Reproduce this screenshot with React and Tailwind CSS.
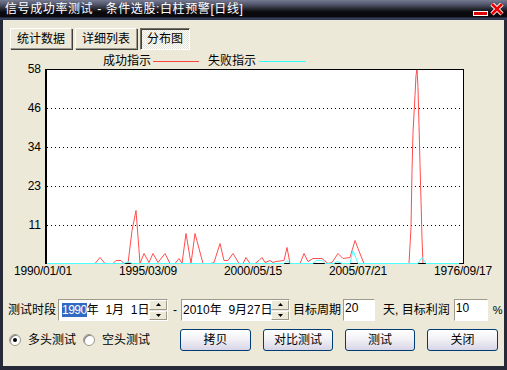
import React from 'react'

const font = { fontFamily: '"Liberation Sans", "Noto Sans CJK SC", sans-serif' }

// red = 成功指示, cyan = 失败指示 (global pixel coords, shifted into the plot)
const red = [
  [45, 263], [95, 263], [100, 257], [105, 263], [113, 263], [116, 260], [121, 260], [124, 263],
  [128, 263], [132, 230], [136, 210], [140, 263], [144, 253], [149, 262], [153, 253], [158, 262],
  [165, 253], [170, 263], [175, 263], [179, 258], [182, 263], [186, 233], [191, 263], [195, 233],
  [203, 263], [211, 263], [214, 262], [220, 243], [224, 260], [228, 260], [233, 253], [239, 263],
  [243, 263], [246, 257], [250, 263], [255, 263], [259, 260], [262, 257], [265, 262], [270, 260],
  [273, 262], [276, 261], [284, 260], [287, 247], [290, 263], [300, 263], [304, 253], [308, 261],
  [313, 258], [322, 258], [328, 263], [332, 262], [338, 253], [343, 258], [350, 257], [355, 240],
  [358, 248], [364, 263], [409, 263], [411, 227], [412, 170], [413, 132], [415, 95], [416, 75],
  [417, 68], [418, 87], [419, 125], [420, 163], [421, 200], [422, 238], [423, 263], [463, 263],
]
const cyan = [
  [45, 263], [124, 263], [128, 261], [132, 263], [284, 263], [287, 260], [290, 263], [313, 263],
  [316, 260], [322, 260], [325, 263], [334, 263], [337, 261], [342, 263], [350, 263], [353, 250],
  [358, 263], [418, 263], [422, 257], [426, 263], [459, 263],
]
const pts = (a) => a.map(([x, y]) => `${x - 45},${y - 68.5}`).join(' ')

function TabButton({ label, active }) {
  return (
    <div
      className={
        active
          ? 'h-[22px] px-[6px] flex items-center border border-t-[#716f64] border-l-[#716f64] border-r-white border-b-white bg-[image:repeating-conic-gradient(#ffffff_0_25%,#e4e1d2_0_50%)] bg-[length:2px_2px] shadow-[inset_1px_1px_0_#404040]'
          : 'h-[21px] px-[6px] flex items-center border border-t-white border-l-white border-r-[#9d9a8c] border-b-[#9d9a8c] shadow-[1px_1px_0_#404040]'
      }
    >
      <span className="text-[12px] leading-[14px] text-black">{label}</span>
    </div>
  )
}

function Spin() {
  return (
    <div className="flex flex-col w-[18px] h-full gap-[1px] shrink-0">
      <div className="flex-1 flex items-center justify-center bg-[#ece9d8] border border-t-white border-l-white border-r-[#9d9a8c] border-b-[#9d9a8c]">
        <svg width="5" height="3"><path d="M2.5 0 L5 3 L0 3 Z" fill="#000" /></svg>
      </div>
      <div className="flex-1 flex items-center justify-center bg-[#ece9d8] border border-t-white border-l-white border-r-[#9d9a8c] border-b-[#9d9a8c]">
        <svg width="5" height="3"><path d="M0 0 L5 0 L2.5 3 Z" fill="#000" /></svg>
      </div>
    </div>
  )
}

function XpButton({ label, w }) {
  return (
    <div className={`${w} h-[22px] flex items-center justify-center rounded-[3px] border border-[#003c74] bg-[linear-gradient(to_bottom,#ffffff,#f2f1f6_45%,#d8d6e6)]`}>
      <span className="text-[12px] leading-[14px] text-black">{label}</span>
    </div>
  )
}

function Radio({ checked, label }) {
  return (
    <div className="flex items-center">
      <div className="w-[12px] h-[12px] rounded-full border border-[#9d9a8c] bg-white flex items-center justify-center shadow-[inset_1px_1px_0_#808080]">
        {checked && <div className="w-[4px] h-[4px] rounded-full bg-black" />}
      </div>
      <span className="ml-[7px] text-[12px] leading-[14px] whitespace-nowrap">{label}</span>
    </div>
  )
}

export default function App() {
  return (
    <div className="w-[507px] h-[370px] flex flex-col bg-[#262a38] text-black" style={font}>
      {/* title bar */}
      <div className="h-[20px] flex items-start bg-[linear-gradient(to_bottom,#767a92_0px,#565a70_4px,#25272f_9px,#0a0a0e_12px,#0a0a0e_17px,#3a4462_18px,#2c3450_20px)]">
        <span className="ml-[5px] mt-[2px] text-[12px] leading-[14px] text-white tracking-[0.6px] whitespace-nowrap">
          信号成功率测试 - 条件选股:白柱预警[日线]
        </span>
        <div className="ml-auto flex items-start">
          <svg width="16" height="16" className="mt-[2px]">
            <rect x="0.5" y="9.5" width="14" height="4" fill="#e00000" stroke="#fff" strokeWidth="1" />
          </svg>
          <svg width="15" height="14" className="ml-[1px] mr-[2px] mt-[3px]">
            <path d="M2 1 L12 11 M12 1 L2 11" stroke="#fff" strokeWidth="4.5" />
            <path d="M2 1 L12 11 M12 1 L2 11" stroke="#ee0000" strokeWidth="2.5" />
          </svg>
        </div>
      </div>

      {/* body */}
      <div className="flex-1 mx-[3px] mb-[4px] bg-[#ece9d8] flex flex-col">
        <div className="flex items-start gap-[3px] pl-[7px] mt-[8px]">
          <TabButton label="统计数据" />
          <TabButton label="详细列表" />
          <TabButton label="分布图" active />
        </div>

        {/* legend */}
        <div className="flex items-center pl-[100px] mt-[4px] h-[14px]">
          <span className="text-[12px] leading-[14px]">成功指示</span>
          <div className="ml-[2px] w-[46px] h-[1px] bg-[#ff4040]" />
          <span className="ml-[9px] text-[12px] leading-[14px]">失败指示</span>
          <div className="ml-[3px] w-[46px] h-[1px] bg-[#30ffff]" />
        </div>

        {/* chart */}
        <div className="flex items-start mt-[1px]">
          <div className="w-[42px] pr-[4px] -mt-[7px] flex flex-col text-right">
            {['58', '46', '34', '23', '11'].map((v) => (
              <div key={v} className="h-[39px] text-[12px] leading-[14px]">{v}</div>
            ))}
          </div>
          <svg width="419" height="195" className="bg-white block" shapeRendering="crispEdges">
            {[39.5, 78.5, 117.5, 156.5].map((y) => (
              <line key={y} x1="2" y1={y} x2="418" y2={y} stroke="#000" strokeDasharray="1 3" />
            ))}
            <polyline points={pts(red)} fill="none" stroke="#ff4d4d" strokeWidth="1" shapeRendering="auto" />
            <line x1="0" y1="194.5" x2="419" y2="194.5" stroke="#000" />
            <polyline points={pts(cyan)} fill="none" stroke="#4dffff" strokeWidth="1" shapeRendering="auto" />
            <line x1="0" y1="0.5" x2="419" y2="0.5" stroke="#000" />
            <line x1="1" y1="0" x2="1" y2="195" stroke="#000" strokeWidth="2" />
            <line x1="418.5" y1="0" x2="418.5" y2="195" stroke="#000" />
          </svg>
        </div>
        <div className="flex items-start pl-[11px] gap-[47px] h-[14px]">
          {['1990/01/01', '1995/03/09', '2000/05/15', '2005/07/21', '1976/09/17'].map((d) => (
            <span key={d} className="w-[58px] text-[12px] leading-[14px] whitespace-nowrap tracking-[-0.2px]">{d}</span>
          ))}
        </div>

        {/* period / targets */}
        <div className="flex items-center mt-[21px] h-[22px] whitespace-nowrap">
          <span className="ml-[5px] shrink-0 text-[12px] leading-[14px]">测试时段</span>
          <div className="ml-[2px] shrink-0 w-[110px] h-[22px] flex border border-t-[#9d9a8c] border-l-[#9d9a8c] border-r-white border-b-white">
            <div className="flex-1 bg-white flex items-center pl-[3px] text-[12px] leading-[14px] overflow-hidden">
              <span className="bg-[#316ac5] text-white tracking-[-0.5px]">1990</span>
              <span>年&nbsp;&nbsp;1月&nbsp;&nbsp;1日</span>
            </div>
            <Spin />
          </div>
          <span className="ml-[5px] shrink-0 text-[12px]">-</span>
          <div className="ml-[4px] shrink-0 w-[109px] h-[22px] flex border border-t-[#9d9a8c] border-l-[#9d9a8c] border-r-white border-b-white">
            <div className="flex-1 bg-white flex items-center pl-[1px] text-[12px] leading-[14px] overflow-hidden">
              <span>2010年&nbsp;&nbsp;9月27日</span>
            </div>
            <Spin />
          </div>
          <span className="ml-[3px] shrink-0 text-[12px] leading-[14px]">目标周期</span>
          <div className="ml-[2px] shrink-0 w-[32px] h-[22px] bg-white border border-t-[#9d9a8c] border-l-[#9d9a8c] border-r-white border-b-white flex items-start pl-[1px] pt-[1px] text-[12px] leading-[14px]">
            20
          </div>
          <span className="ml-[8px] shrink-0 text-[12px] leading-[14px]">天, 目标利润</span>
          <div className="ml-[4px] shrink-0 w-[34px] h-[22px] bg-white border border-t-[#9d9a8c] border-l-[#9d9a8c] border-r-white border-b-white flex items-start pl-[1px] pt-[1px] text-[12px] leading-[14px]">
            10
          </div>
          <span className="ml-[5px] shrink-0 text-[11px] leading-[14px]">%</span>
        </div>

        {/* radio + buttons */}
        <div className="flex items-center mt-[8px] h-[22px]">
          <div className="ml-[6px] w-[74px] shrink-0">
            <Radio checked label="多头测试" />
          </div>
          <div className="w-[97px] shrink-0">
            <Radio label="空头测试" />
          </div>
          <div className="flex gap-[12px]">
            <XpButton label="拷贝" w="w-[71px]" />
            <XpButton label="对比测试" w="w-[70px]" />
            <XpButton label="测试" w="w-[70px]" />
            <XpButton label="关闭" w="w-[71px]" />
          </div>
        </div>
      </div>
    </div>
  )
}
